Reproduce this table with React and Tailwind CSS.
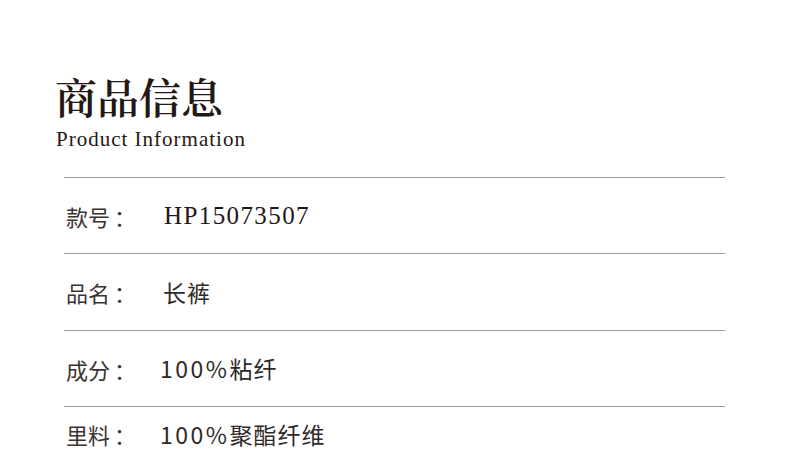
const CJK = "font-['Noto_Serif_CJK_SC','Noto_Sans_CJK_SC',serif]"
const SANS = "font-['Noto_Sans_CJK_SC',sans-serif]"
const SERIF = "font-['Liberation_Serif','Noto_Serif_CJK_SC',serif]"

const rows = [
  { label: '款号', value: 'HP15073507', serif: true, h: 'h-[76px]' },
  { label: '品名', value: '长裤', h: 'h-[77px]' },
  { label: '成分', value: '100%粘纤', h: 'h-[76px]', shift: true },
  { label: '里料', value: '100%聚酯纤维', h: 'h-[55px]', shift: true },
]

export default function App() {
  return (
    <div className="w-[790px] h-[461px] bg-white overflow-hidden text-[#231815]">
      {/* Heading */}
      <div className="pl-[55px] pt-[75px]">
        <h1 className={`${CJK} text-[42px] leading-none font-semibold`}>商品信息</h1>
        <p className={`${SERIF} text-[21px] leading-none tracking-[1px] mt-[12px] pl-[1px]`}>Product Information</p>
      </div>

      {/* Info rows */}
      <div className="ml-[64px] w-[661px] mt-[27px]">
        {rows.map(r => (
          <div key={r.label} className={`${r.h} border-t border-[#9d9d9d] flex items-center`}>
            <span className={`${SANS} w-[99px] shrink-0 pl-[2px] text-[22px] leading-none text-[#3a3433] flex items-center`}>
              {r.label}<span className="ml-[4px]">：</span>
            </span>
            {r.serif ? (
              <span className={`${SERIF} text-[25px] leading-none tracking-[1.4px] ml-[1px]`}>{r.value}</span>
            ) : (
              <span className={`${SANS} text-[23px] leading-none tracking-[1px] text-[#2f2a28] ${r.shift ? '-ml-[3px]' : ''}`}>
                {r.value.startsWith('100%') ? (
                  <><span className="tracking-[2.5px]">100%</span>{r.value.slice(4)}</>
                ) : r.value}
              </span>
            )}
          </div>
        ))}
      </div>
    </div>
  )
}
